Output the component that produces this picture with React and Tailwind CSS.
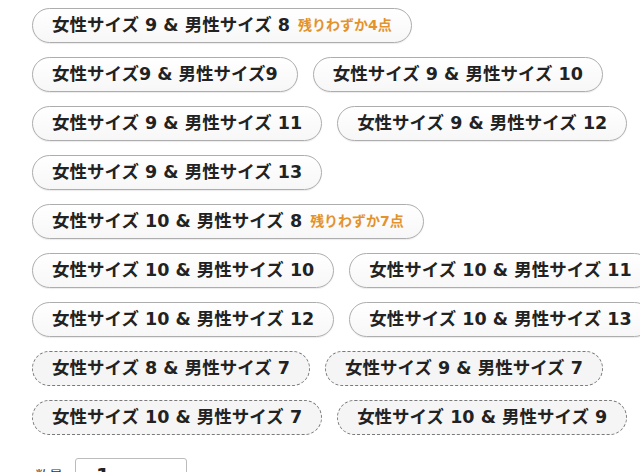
import React from "react";

const rows = [
  [{ w: "9", m: "8", stock: "残りわずか4点" }],
  [{ label: "女性サイズ9 & 男性サイズ9" }, { w: "9", m: "10" }],
  [{ w: "9", m: "11" }, { w: "9", m: "12" }],
  [{ w: "9", m: "13" }],
  [{ w: "10", m: "8", stock: "残りわずか7点" }],
  [{ w: "10", m: "10" }, { w: "10", m: "11" }],
  [{ w: "10", m: "12" }, { w: "10", m: "13" }],
  [{ w: "8", m: "7", soldOut: true }, { w: "9", m: "7", soldOut: true }],
  [{ w: "10", m: "7", soldOut: true }, { w: "10", m: "9", soldOut: true }],
];

function SizeOption({ opt }) {
  const label = opt.label || `女性サイズ ${opt.w} & 男性サイズ ${opt.m}`;
  const base =
    "shrink-0 h-[35px] flex items-center px-[19px] rounded-full whitespace-nowrap text-[17.5px] font-bold text-[#222]";
  const look = opt.soldOut
    ? "border border-dashed border-[#7a7a7a] bg-[#f5f5f5]"
    : "border border-[#adadad] bg-gradient-to-b from-white to-[#f7f7f7] shadow-[0_1px_1px_rgba(0,0,0,0.08)]";
  return (
    <div className={`${base} ${look}`}>
      <span>{label}</span>
      {opt.stock && (
        <span className="ml-[8px] text-[14px] text-[#e3922c]">{opt.stock}</span>
      )}
    </div>
  );
}

export default function App() {
  return (
    <div
      className="w-[640px] h-[472px] overflow-hidden bg-white"
      style={{ fontFamily: '"DejaVu Sans", "Noto Sans CJK JP", sans-serif' }}
    >
      <div className="pl-[32px] pt-[8px] flex flex-col gap-[14px]">
        {rows.map((row, i) => (
          <div key={i} className="flex gap-[15px]">
            {row.map((opt, j) => (
              <SizeOption key={j} opt={opt} />
            ))}
          </div>
        ))}
      </div>
      <div className="flex items-start pl-[35px] mt-[23px] gap-[12px]">
        <span className="pt-[8px] text-[14px] text-[#333]">数量</span>
        <div className="w-[112px] h-[36px] border border-[#bbb] rounded-[3px] pl-[20px] pt-[1px] text-[20px] font-bold text-[#222]">
          1
        </div>
      </div>
    </div>
  );
}
